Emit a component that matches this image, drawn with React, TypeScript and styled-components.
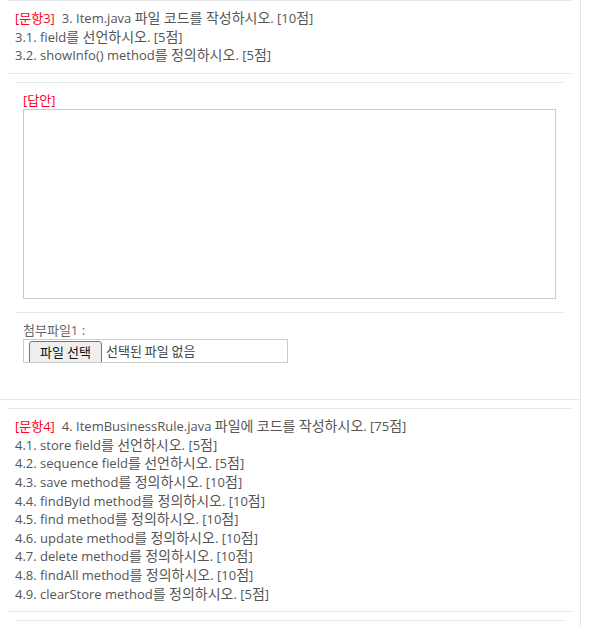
import React from "react";
import styled, { createGlobalStyle } from "styled-components";

const GlobalStyle = createGlobalStyle`
  html, body {
    margin: 0;
    padding: 0;
    background: #fff;
  }
  body {
    font-family: "Open Sans", "Noto Sans CJK KR", sans-serif;
    font-size: 13px;
    line-height: 18.5714px;
    color: #555;
  }
  * { box-sizing: border-box; }
`;

const Page = styled.div`
  width: 581px;
  min-height: 627px;
  border-right: 1px solid #e3e5e8;
`;

const Item = styled.div<{ $last?: boolean }>`
  border-bottom: ${(p) => (p.$last ? "none" : "1px solid #e5e8ec")};
  padding-bottom: ${(p) => (p.$last ? "0" : "36px")};
`;

const Question = styled.div<{ $first?: boolean }>`
  margin: ${(p) => (p.$first ? "0" : "8px")} 8px 0 7px;
  border-top: 1px solid #e5e8ec;
  border-bottom: 1px solid #e5e8ec;
  padding: 8px;
`;

const Tag = styled.span`
  color: #ff0022;
  margin-right: 7px;
`;

const Line = styled.div`
  white-space: nowrap;
`;

// Hangul is drawn a touch wider in the original page
const Ko = styled.span`
  font-size: 14px;
  line-height: 0;
`;

const Block = styled.div`
  margin: 8px 16px 0 15px;
  border-top: 1px solid #e5e8ec;
  padding: 8px 8px 0 8px;
`;

const AnswerLabel = styled.div`
  color: #ff0022;
  line-height: 18px;
`;

const AnswerArea = styled.textarea`
  display: block;
  width: 533px;
  height: 190px;
  margin: 0 0 13px 0;
  border: 1px solid #cacacf;
  resize: none;
  font: inherit;
  outline: none;
`;

const AttachBlock = styled(Block)`
  margin-top: 0;
  padding-top: 8px;
`;

const AttachLabel = styled.div`
  color: #666;
`;

const FileBox = styled.div`
  display: flex;
  align-items: flex-start;
  width: 265px;
  height: 24px;
  border: 1px solid #ccc;
  overflow: hidden;
  font-family: "Noto Sans CJK KR", sans-serif;
`;

const FileButton = styled.span`
  flex: none;
  display: flex;
  align-items: center;
  justify-content: center;
  height: 23px;
  width: 73px;
  margin: 1px 4px 0 5px;
  border: 1px solid #767676;
  border-radius: 3px;
  background: #efefef;
  color: #111;
  font-size: 13px;
  padding-bottom: 1px;
`;

const FileText = styled.span`
  color: #444;
  font-size: 13px;
  line-height: 21px;
`;

function Text({ children }: { children: string }) {
  const parts = children.split(/([\uac00-\ud7a3]+)/);
  return (
    <>
      {parts.map((p, i) =>
        i % 2 === 1 ? <Ko key={i}>{p}</Ko> : <React.Fragment key={i}>{p}</React.Fragment>
      )}
    </>
  );
}

const q3Lines = [
  "3.1. field를 선언하시오. [5점]",
  "3.2. showInfo() method를 정의하시오. [5점]",
];

const q4Lines = [
  "4.1. store field를 선언하시오. [5점]",
  "4.2. sequence field를 선언하시오. [5점]",
  "4.3. save method를 정의하시오. [10점]",
  "4.4. findById method를 정의하시오. [10점]",
  "4.5. find method를 정의하시오. [10점]",
  "4.6. update method를 정의하시오. [10점]",
  "4.7. delete method를 정의하시오. [10점]",
  "4.8. findAll method를 정의하시오. [10점]",
  "4.9. clearStore method를 정의하시오. [5점]",
];

export default function App() {
  return (
    <>
      <GlobalStyle />
      <Page>
        <Item>
          <Question $first>
            <Line>
              <Tag>[문항3]</Tag>
              <Text>3. Item.java 파일 코드를 작성하시오. [10점]</Text>
            </Line>
            {q3Lines.map((t) => (
              <Line key={t}>
                <Text>{t}</Text>
              </Line>
            ))}
          </Question>
          <Block>
            <AnswerLabel>[답안]</AnswerLabel>
            <AnswerArea />
          </Block>
          <AttachBlock>
            <AttachLabel>첨부파일1 :</AttachLabel>
            <FileBox>
              <FileButton>파일 선택</FileButton>
              <FileText>선택된 파일 없음</FileText>
            </FileBox>
          </AttachBlock>
        </Item>
        <Item $last>
          <Question>
            <Line>
              <Tag>[문항4]</Tag>
              <Text>4. ItemBusinessRule.java 파일에 코드를 작성하시오. [75점]</Text>
            </Line>
            {q4Lines.map((t) => (
              <Line key={t}>
                <Text>{t}</Text>
              </Line>
            ))}
          </Question>
          <Block />
        </Item>
      </Page>
    </>
  );
}
